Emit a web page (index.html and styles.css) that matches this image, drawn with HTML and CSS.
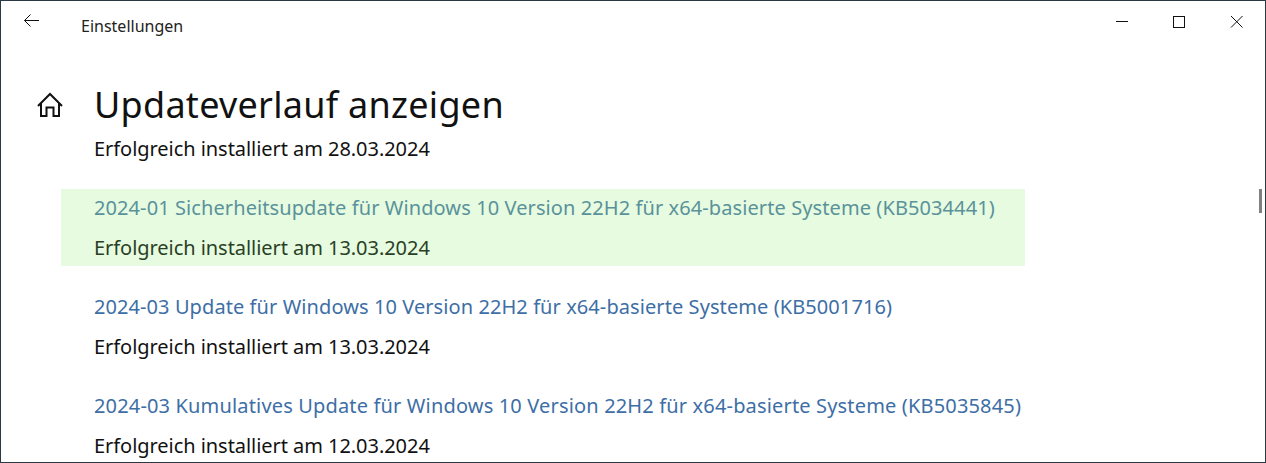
FILE: index.html
```html
<!DOCTYPE html>
<html lang="de">
<head>
<meta charset="utf-8">
<title>Einstellungen</title>
<link rel="stylesheet" href="styles.css">
</head>
<body>
<div class="window">
  <header class="titlebar">
    <button class="back" aria-label="Zurück">
      <svg width="18" height="16" viewBox="0 0 18 16"><path d="M17 7.500H2.500M8.500 1.500L2.500 7.500l6 6" fill="none" stroke="#111" stroke-width="1"/></svg>
    </button>
    <span class="app-name">Einstellungen</span>
    <div class="controls">
      <svg width="13" height="13" viewBox="0 0 13 13"><path d="M0 6.5H12" stroke="#111" stroke-width="1"/></svg>
      <svg width="13" height="13" viewBox="0 0 13 13"><rect x="0.5" y="1.5" width="11" height="11" fill="none" stroke="#111" stroke-width="1"/></svg>
      <svg width="13" height="13" viewBox="0 0 13 13"><path d="M1 1L12.500 12.500M12.500 1L1 12.500" stroke="#111" stroke-width="1"/></svg>
    </div>
  </header>
  <main class="page">
    <div class="heading">
      <svg class="home" width="28" height="26" viewBox="0 0 28 26"><path d="M2 14L14 2l12 12M5 11v13h5.500v-8.500h7V24H23V11" fill="none" stroke="#111" stroke-width="2"/></svg>
      <h1>Updateverlauf anzeigen</h1>
    </div>
    <p class="status first">Erfolgreich installiert am 28.03.2024</p>
    <section class="entry highlighted">
      <a class="link">2024-01 Sicherheitsupdate für Windows 10 Version 22H2 für x64-basierte Systeme (KB5034441)</a>
      <p class="status">Erfolgreich installiert am 13.03.2024</p>
    </section>
    <section class="entry">
      <a class="link">2024-03 Update für Windows 10 Version 22H2 für x64-basierte Systeme (KB5001716)</a>
      <p class="status">Erfolgreich installiert am 13.03.2024</p>
    </section>
    <section class="entry">
      <a class="link link-wide">2024-03 Kumulatives Update für Windows 10 Version 22H2 für x64-basierte Systeme (KB5035845)</a>
      <p class="status">Erfolgreich installiert am 12.03.2024</p>
    </section>
  </main>
  <div class="scrollthumb"></div>
</div>
</body>
</html>
```
FILE: styles.css
```css
* { box-sizing: border-box; }
html, body { margin: 0; height: 100%; overflow: hidden; background: #fff; }
body { font-family: "Noto Sans", "Open Sans", sans-serif; color: #111; }
.window {
  position: relative;
  height: 463px;
  border: 1px solid #2b3a42;
  overflow: hidden;
}
.titlebar { display: flex; align-items: center; height: 44px; padding-left: 21px; }
.back { display: flex; width: 18px; padding: 0; border: 0; background: none; margin-top: -4px; }
.app-name { margin-left: 41px; font-size: 16px; color: #222; margin-top: 6px; }
.controls { display: flex; gap: 44px; margin-left: auto; margin-right: 22px; margin-top: -4px; }
.page { padding-left: 93px; }
.heading { display: flex; align-items: center; height: 60px; margin-top: 30px; position: relative; }
.home { position: absolute; left: -58px; top: 17px; }
h1 { margin: 0; font-size: 36px; font-weight: 400; line-height: 60px; color: #111; letter-spacing: 0.27px; }
.status { margin: 0; font-size: 20px; line-height: 30px; color: #111; letter-spacing: -0.05px; }
.first { margin-top: -1px; }
.entry { width: 964px; margin-left: -33px; padding-left: 33px; height: 77px; margin-top: 22px; }
.highlighted { background: #e6fbdf; margin-top: 25px; }
.link { display: block; font-size: 20px; line-height: 38px; color: #3d6ea5; white-space: nowrap; letter-spacing: 0.08px; }
.link-wide { letter-spacing: 0.16px; }
.entry .status { line-height: 41px; }
.highlighted .link { color: #5a929b; letter-spacing: 0.09px; }
.highlighted .status { color: #2a3f26; }
.scrollthumb { position: absolute; right: 3px; top: 188px; width: 3px; height: 24px; background: #808080; }
```
